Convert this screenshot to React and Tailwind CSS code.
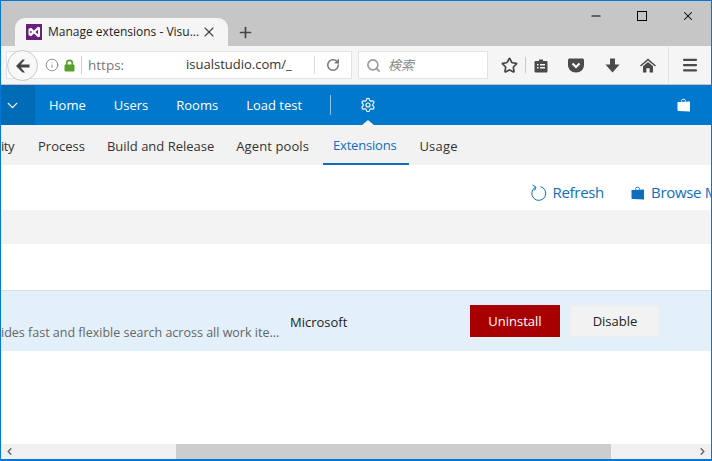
import React from "react";
import { ChevronDown, Settings, X, Plus, Search, Info, RotateCw, Star, Menu, Minus, ChevronLeft, ChevronRight } from "lucide-react";

function VsLogo() {
  return (
    <svg width="16" height="16" viewBox="0 0 16 16" className="shrink-0">
      <rect width="16" height="16" fill="#68217a" />
      <path d="M2.5 5 L5 3.8 L8 6.6 L12 2.8 L14 3.6 V12.4 L12 13.2 L8 9.4 L5 12.2 L2.5 11 Z M4.2 6.4 V9.6 L6.2 8 Z M9.4 8 L12 10.2 V5.8 Z" fill="#fff" fillRule="evenodd" />
    </svg>
  );
}

function Bag({ className }) {
  return (
    <svg width="14" height="14" viewBox="0 0 14 14" className={className}>
      <path d="M4.5 3.5 V2.6 C4.5 0.8 8.5 0.8 8.5 2.6 V3.5" fill="none" stroke="currentColor" strokeWidth="1" />
      <path d="M0.5 4 L13 3.6 V13.5 L2 13 C1 13 0.5 12.5 0.5 11.5 Z" fill="currentColor" />
    </svg>
  );
}

function TabStrip() {
  return (
    <div className="h-[45px] bg-[#c6c6c6] flex items-end pl-[14px] relative">
      <div className="w-[213px] h-[28px] bg-[#f5f5f5] rounded-t-[10px] flex items-center pl-[11px] pr-[11px]">
        <VsLogo />
        <span className="ml-[6px] text-[12px] text-[#222] whitespace-nowrap flex-1">Manage extensions - Visu...</span>
        <X size={16} strokeWidth={1.6} className="text-[#444]" />
      </div>
      <div className="h-[28px] flex items-center ml-[9px]">
        <Plus size={17} strokeWidth={2.4} className="text-[#444]" />
      </div>
      <div className="absolute right-[16px] top-0 h-[30px] flex items-center gap-[34px] text-black">
        <Minus size={14} strokeWidth={2} />
        <div className="w-[10px] h-[10px] border border-black" />
        <X size={14} strokeWidth={1.8} />
      </div>
    </div>
  );
}

function ToolBar() {
  return (
    <div className="h-[39px] bg-[#f5f5f5] border-b border-[#c4c4c4] flex items-center pl-[5px] pr-[12px]">
      <div className="w-[346px] h-[28px] bg-white border border-[#e2e2e2] flex items-center relative pl-[38px]">
        <div className="absolute left-[0px] top-[-2px] w-[31px] h-[31px] rounded-full border border-[#c8c8c8] bg-[#f8f8f8] flex items-center justify-center">
          <svg width="15" height="14" viewBox="0 0 15 14">
            <path d="M7.5 0.5 L1 7 L7.5 13.5 H10 L5.8 8.6 H14.5 V5.4 H5.8 L10 0.5 Z" fill="#444" />
          </svg>
        </div>
        <Info size={14} strokeWidth={1.6} className="text-[#8a8a8a]" />
        <svg width="11" height="13" viewBox="0 0 11 13" className="ml-[5px]">
          <path d="M2.8 6 V3.8 C2.8 0.6 8.2 0.6 8.2 3.8 V6" fill="none" stroke="#58a02a" strokeWidth="1.6" />
          <rect x="0.5" y="5.5" width="10" height="7" rx="1" fill="#58a02a" />
        </svg>
        <div className="w-px h-[18px] bg-[#d0d0d0] ml-[6px]" />
        <span className="ml-[6px] text-[13.5px] text-[#777] w-[61px]">https:</span>
        <span className="ml-[37px] text-[13px] text-[#333] flex-1 whitespace-nowrap">isualstudio.com/_</span>
        <div className="w-px h-[18px] bg-[#d8d8d8]" />
        <RotateCw size={14} strokeWidth={2.6} className="text-[#777] mx-[11px]" />
      </div>
      <div className="ml-[6px] w-[130px] h-[28px] bg-white border border-[#e2e2e2] flex items-center pl-[7px]">
        <Search size={15} strokeWidth={2.6} className="text-[#999]" />
        <span className="ml-[7px] text-[13px] italic text-[#888] font-['Noto_Sans_CJK_JP',sans-serif]">検索</span>
      </div>
      <Star size={17} strokeWidth={2.4} className="text-[#444] ml-[13px]" />
      <div className="w-px h-[16px] bg-[#ccc] ml-[7px]" />
      <svg width="14" height="15" viewBox="0 0 14 15" className="ml-[8px]">
        <path d="M5 1.5 H9 V3 H12.5 C13 3 13.5 3.5 13.5 4 V13.5 C13.5 14 13 14.5 12.5 14.5 H1.5 C1 14.5 .5 14 .5 13.5 V4 C.5 3.5 1 3 1.5 3 H5 Z M3 6 V7.5 H4.5 V6 Z M6 6 V7.5 H11 V6 Z M3 9 V10.5 H4.5 V9 Z M6 9 V10.5 H11 V9 Z" fill="#4a4a4a" fillRule="evenodd" />
      </svg>
      <svg width="16" height="15" viewBox="0 0 16 15" className="ml-[20px]">
        <path d="M1.5 .5 H14.5 C15.2 .5 16 1.2 16 2 V7 C16 11.5 12.5 14.5 8 14.5 C3.5 14.5 0 11.5 0 7 V2 C0 1.2 .8 .5 1.5 .5 Z" fill="#4a4a4a" />
        <path d="M4.5 5.5 L8 9 L11.5 5.5" fill="none" stroke="#fff" strokeWidth="2.2" />
      </svg>
      <svg width="15" height="15" viewBox="0 0 15 15" className="ml-[21px]">
        <path d="M5 0.5 H10 V6.5 H14.5 L7.5 14.5 L0.5 6.5 H5 Z" fill="#4a4a4a" />
      </svg>
      <svg width="16" height="15" viewBox="0 0 16 15" className="ml-[20px]">
        <path d="M8 0.5 L16 7.5 L15 8.6 L8 2.6 L1 8.6 L0 7.5 Z M8 4 L13 8.2 V14.5 H9.6 V10.2 H6.4 V14.5 H3 V8.2 Z" fill="#4a4a4a" />
      </svg>
      <div className="w-px h-[36px] bg-[#e2e2e2] ml-[12px]" />
      <Menu size={18} strokeWidth={3} className="text-[#4a4a4a] ml-[12px]" />
    </div>
  );
}

function Nav() {
  const items = ["Home", "Users", "Rooms", "Load test"];
  return (
    <div className="h-[40px] bg-[#0078cc] flex items-center text-white relative">
      <div className="w-[34px] h-full bg-[#006cb8] flex items-center pl-[3px]">
        <ChevronDown size={17} strokeWidth={1.8} />
      </div>
      <div className="flex items-center ml-[14px] pt-[2px] gap-[28px] text-[13px]">
        {items.map((item) => (
          <span key={item} className="whitespace-nowrap">{item}</span>
        ))}
      </div>
      <div className="w-px h-[20px] bg-[#8cc4ea] ml-[28px]" />
      <Settings size={16} strokeWidth={1.8} className="ml-[29px]" />
      <div className="absolute left-[361px] bottom-0 w-0 h-0 border-x-[6px] border-x-transparent border-b-[5px] border-b-[#f2f2f2]" />
      <Bag className="ml-auto mr-[20px]" />
    </div>
  );
}

function SubNav() {
  return (
    <div className="h-[40px] bg-[#f2f2f2] flex items-stretch text-[13px] text-[#333] overflow-hidden">
      <span className="self-center pt-[3px] w-[37px] tracking-[-0.5px]">ity</span>
      <span className="self-center pt-[3px]">Process</span>
      <span className="self-center pt-[3px] ml-[22px]">Build and Release</span>
      <span className="self-center pt-[3px] ml-[22px] tracking-[0.1px]">Agent pools</span>
      <span className="ml-[14px] pl-[10px] pr-[13px] pt-[3px] flex items-center text-[#106ebe] tracking-[-0.2px] border-b-2 border-[#106ebe]">Extensions</span>
      <span className="self-center pt-[3px] ml-[10px] tracking-[0.2px]">Usage</span>
    </div>
  );
}

function ExtensionRow() {
  return (
    <div className="h-[61px] bg-[#e3f0f9] border-t border-[#d4dfe8] flex items-center shrink-0">
      <span className="w-[289px] pt-[24px] text-[12.5px] text-[#666] whitespace-nowrap overflow-hidden">ides fast and flexible search across all work ite...</span>
      <span className="w-[180px] pt-[3px] text-[13px] text-[#222]">Microsoft</span>
      <button className="w-[90px] h-[32px] pt-[2px] bg-[#a80000] text-white text-[13px]">Uninstall</button>
      <button className="ml-[10px] w-[90px] h-[32px] pt-[2px] bg-[#f2f2f2] border border-[#ececec] text-[#222] text-[13px]">Disable</button>
    </div>
  );
}

function ScrollBar() {
  return (
    <div className="h-[15px] bg-[#f0f0f0] flex items-center justify-between relative shrink-0">
      <ChevronLeft size={11} strokeWidth={3} className="text-[#666] ml-[3px]" />
      <div className="absolute left-[175px] top-0 w-[435px] h-full bg-[#cdcdcd]" />
      <ChevronRight size={11} strokeWidth={3} className="text-[#666] mr-[3px]" />
    </div>
  );
}

export default function App() {
  return (
    <div className="w-[712px] h-[461px] bg-white border-x-[1px] border-t-[1px] border-b-[2px] border-[#0078d7] flex flex-col overflow-hidden font-['Open_Sans',sans-serif]">
      <TabStrip />
      <ToolBar />
      <Nav />
      <SubNav />
      <div className="h-[45px] pt-[10px] flex items-center justify-end overflow-hidden text-[#106ebe] text-[15px] whitespace-nowrap shrink-0">
        <svg width="16" height="17" viewBox="0 0 16 17" fill="none" stroke="currentColor" strokeWidth="1" className="mr-[5px]">
          <path d="M4.5 3.2 A7 7 0 1 0 9.5 2.6" />
          <path d="M1.5 1 L5 3.2 L3.5 6.5" />
        </svg>
        <span className="tracking-[-0.3px]">Refresh</span>
        <Bag className="ml-[27px] mr-[6px]" />
        <span className="w-[60px] overflow-hidden tracking-[-0.3px]">Browse Marketplace</span>
      </div>
      <div className="h-[34px] bg-[#f3f3f3] shrink-0" />
      <div className="h-[46px] shrink-0" />
      <ExtensionRow />
      <div className="flex-1" />
      <ScrollBar />
    </div>
  );
}
